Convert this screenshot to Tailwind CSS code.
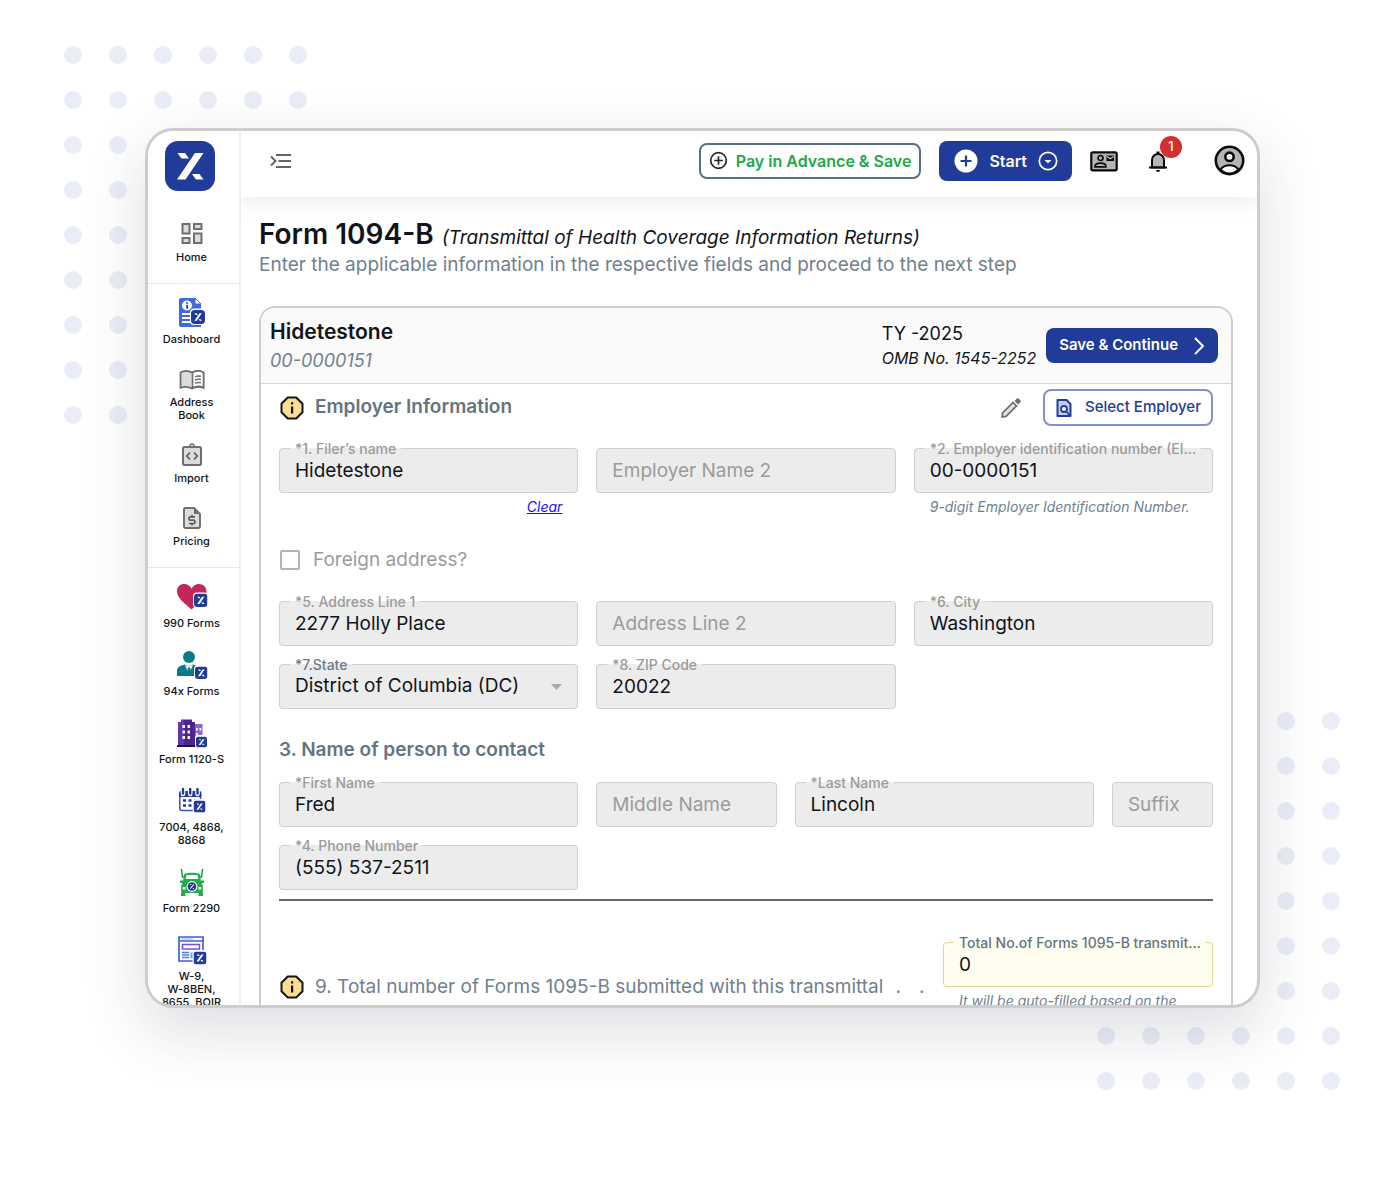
<!DOCTYPE html>
<html lang="en">
<head>
  <meta charset="UTF-8" />
  <meta name="viewport" content="width=device-width, initial-scale=1" />
  <title>Form 1094-B</title>
  <script src="https://cdn.jsdelivr.net/npm/@tailwindcss/browser@4"></script>
</head>
<body class="bg-white font-['Inter',sans-serif] text-[#111418]">

  <!-- shared symbols -->
  <svg class="absolute size-0" aria-hidden="true">
    <defs>
      <pattern id="dots" width="45" height="45" patternUnits="userSpaceOnUse">
        <circle cx="22" cy="22" r="9" fill="#eaedf7" />
      </pattern>
      <symbol id="brand" viewBox="0 0 50 50">
        <rect width="50" height="50" rx="13" fill="#213c98" />
        <path fill="#fff" d="M12.500 12h7.500l4 5.500h-7.500zM30 12h8.500L20.500 38.500H12zM27 33h7.500l4 5.500H31z" />
      </symbol>
      <symbol id="info" viewBox="0 0 24 24">
        <path d="M7.800 1.500h8.400l6.300 6.300v8.400l-6.300 6.300H7.800l-6.300-6.300V7.800z" fill="#fddc94" stroke="#111418" stroke-width="2" stroke-linejoin="round" />
        <path d="M11 10.500h2.200v7H11zM11 6.200h2.200v2.200H11z" fill="#111418" />
      </symbol>
    </defs>
  </svg>

  <div class="relative h-screen overflow-hidden pt-32 pr-[113px] pb-[177px] pl-[145px]">
    <svg class="absolute left-[51px] top-[33px]" width="270" height="405"><rect width="270" height="405" fill="url(#dots)" /></svg>
    <svg class="absolute right-[19px] bottom-[81px]" width="270" height="405"><rect width="270" height="405" fill="url(#dots)" /></svg>

    <div class="relative flex h-full overflow-hidden rounded-[28px] border-3 border-[#cdcdcd] bg-white shadow-[0_22px_60px_2px_rgba(50,55,80,0.16)]">

      <!-- sidebar -->
      <nav class="relative z-20 w-[93px] shrink-0 border-r-2 border-[#edeff2] bg-white pt-[10px] text-center text-[11px] leading-[13px] font-medium">
        <a href="#" class="mb-[25px] flex justify-center pr-2" aria-label="Home page"><svg width="50" height="50"><use href="#brand" /></svg></a>

        <div class="border-b border-[#e4e9ee] pb-[19px]">
          <a href="#" class="flex flex-col items-center gap-[5px] pr-1">
            <span class="flex h-[30px] items-end">
              <svg width="24" height="24" viewBox="0 0 24 24" fill="#dcdcdc" stroke="#6e6e6e" stroke-width="2"><path d="M2.500 2h7v9.500h-7zM14 2h7.500v5H14zM14 11.500h7.500V21H14zM2.500 16h7v5h-7z" /></svg>
            </span>
            Home
          </a>
        </div>

        <div class="flex flex-col gap-[15px] border-b border-[#e4e9ee] pt-[14px] pb-[19px]">
          <a href="#" class="flex flex-col items-center gap-[5px] pr-1">
            <span class="flex h-[30px] items-end">
              <svg width="28" height="30" viewBox="0 0 28 30">
                <path d="M3 0h14l6 6v23H3a2 2 0 0 1-2-2V2a2 2 0 0 1 2-2z" fill="#4169e1" />
                <path d="M17 0l6 6h-6z" fill="#fff" stroke="#4169e1" />
                <circle cx="9" cy="7.500" r="5" fill="#fff" />
                <path d="M8.200 6.800h1.800v4H8.200zM8.200 4.200h1.800v1.600H8.200z" fill="#213c98" />
                <path d="M4 16h9M4 20h8M4 24h8" stroke="#fff" stroke-width="1.800" />
                <rect x="12" y="10.500" width="15.500" height="16.500" rx="4" fill="#fff" />
                <use href="#brand" x="13" y="12" width="14" height="14" />
              </svg>
            </span>
            Dashboard
          </a>
          <a href="#" class="flex flex-col items-center gap-[5px] pr-1">
            <span class="flex h-[30px] items-end">
              <svg width="26" height="22" viewBox="0 0 26 22">
                <path d="M1.500 3.500C5 1.500 9.500 1.500 13 3.500c3.500-2 8-2 11.500 0v15.500c-3.500-1.500-8-1.500-11.500.5-3.500-2-8-2-11.500-.5z" fill="#dcdcdc" stroke="#6e6e6e" stroke-width="1.800" stroke-linejoin="round" />
                <path d="M13.500 3.500c3.500-2 7.500-2 11 0v15c-3.500-1.500-7.500-1.500-11 .5z" fill="#fff" stroke="#6e6e6e" stroke-width="1.600" />
                <path d="M16 7.800c2-.9 4-.9 6-.5M16 11c2-.9 4-.9 6-.5M16 14.200c2-.9 4-.9 6-.5" fill="none" stroke="#6e6e6e" stroke-width="1.400" />
              </svg>
            </span>
            <span>Address<br />Book</span>
          </a>
          <a href="#" class="flex flex-col items-center gap-[5px] pr-1">
            <span class="flex h-[30px] items-end">
              <svg width="22" height="24" viewBox="0 0 22 24">
                <circle cx="11" cy="3" r="2" fill="#fff" stroke="#6e6e6e" stroke-width="1.500" />
                <rect x="2" y="4" width="18" height="18" rx="1.500" fill="#dcdcdc" stroke="#6e6e6e" stroke-width="2" />
                <path d="M9 9.500L5.800 13 9 16.500M13 9.500l3.200 3.500-3.200 3.500" fill="none" stroke="#5e5e5e" stroke-width="1.800" />
              </svg>
            </span>
            Import
          </a>
          <a href="#" class="flex flex-col items-center gap-[5px] pr-1">
            <span class="flex h-[30px] items-end">
              <svg width="20" height="24" viewBox="0 0 20 24">
                <path d="M3 2h9l6 6v12.500a1.500 1.500 0 0 1-1.500 1.500h-13A1.500 1.500 0 0 1 2 20.500V3a1 1 0 0 1 1-1z" fill="#dcdcdc" stroke="#6e6e6e" stroke-width="1.900" />
                <path d="M12 1.500V8h6z" fill="#6e6e6e" />
                <path d="M13 10.800H8.500a1.400 1.400 0 0 0-1.500 1.400v.5a1.400 1.400 0 0 0 1.500 1.500h3a1.400 1.400 0 0 1 1.500 1.400v.5a1.400 1.400 0 0 1-1.500 1.400H7M10 8.800v2M10 17.500v2" fill="none" stroke="#5e5e5e" stroke-width="1.700" />
              </svg>
            </span>
            Pricing
          </a>
        </div>

        <div class="flex flex-col gap-5 pt-[14px]">
          <a href="#" class="flex flex-col items-center gap-[5px] pr-1">
            <span class="flex h-[30px] items-center">
              <svg width="32" height="28" viewBox="0 0 32 28">
                <path d="M15.500 26.500C9 20.500 1 15 1 8.200 1 3.500 4.500 1 8 1c3.500 0 6 1.800 7.500 4.800C17 2.800 19.800 1 23 1c4 0 7.500 3 7.500 7.500 0 7-8.500 12-15 18z" fill="#c42757" />
                <rect x="17" y="9.500" width="15" height="15" rx="4" fill="#fff" />
                <use href="#brand" x="18" y="10.500" width="13.500" height="13.500" />
              </svg>
            </span>
            990 Forms
          </a>
          <a href="#" class="flex flex-col items-center gap-[5px] pr-1">
            <span class="flex h-[30px] items-center">
              <svg width="32" height="30" viewBox="0 0 32 30">
                <circle cx="13" cy="7" r="6" fill="#0a7a86" />
                <path d="M1 26v-5c0-4 3-5.500 8-6.500l4 2 4-2c5 1 8 2.500 8 6.500v5z" fill="#0a7a86" />
                <path d="M9 15l4 9 4-9-4 1.500z" fill="#fff" />
                <path d="M12 17.500h2.200l1.200 6.500-2.300 2-2.300-2z" fill="#0a7a86" />
                <rect x="18" y="15" width="14" height="14" rx="4" fill="#fff" />
                <use href="#brand" x="19" y="16.500" width="12.500" height="12.500" />
              </svg>
            </span>
            94x Forms
          </a>
          <a href="#" class="flex flex-col items-center gap-[5px] pr-1">
            <span class="flex h-[30px] items-center">
              <svg width="32" height="30" viewBox="0 0 32 30">
                <path d="M18 6h8.500v22H18z" fill="#8d63d2" />
                <path d="M20 10h1.800v2.500H20zM23.500 10h1.800v2.500h-1.800zM20 15h1.800v2.500H20z" fill="#fff" />
                <path d="M2 4h3V1.500h11V4h3v24H2z" fill="#4a2590" />
                <path d="M5 2h3v26H2V4h3z" fill="#6236b0" />
                <path d="M6.500 7H9v3H6.500zM11.500 7H14v3h-2.500zM6.500 12.500H9v3H6.500zM11.500 12.500H14v3h-2.500zM6.500 18H9v3H6.500zM11.500 18H14v3h-2.500z" fill="#fff" />
                <path d="M1 27h19v2H1z" fill="#1d1138" />
                <rect x="19" y="17" width="13" height="13" rx="3" fill="#fff" />
                <use href="#brand" x="20" y="18.500" width="11" height="11" />
              </svg>
            </span>
            Form 1120-S
          </a>
          <a href="#" class="flex flex-col items-center gap-[5px] pr-1">
            <span class="flex h-[30px] items-center">
              <svg width="28" height="28" viewBox="0 0 28 28">
                <path d="M1.800 8v13.500a2 2 0 0 0 2 2H15M22.500 8v4" fill="none" stroke="#3a55ac" stroke-width="1.500" />
                <path d="M1 10V6a2 2 0 0 1 2-2h18.500a2 2 0 0 1 2 2v4z" fill="#213c98" />
                <path d="M5 2v5M12.200 2v5M19.500 2v5" stroke="#fff" stroke-width="4.600" stroke-linecap="round" />
                <path d="M5 2v4.500M12.200 2v4.500M19.500 2v4.500" stroke="#213c98" stroke-width="2.400" stroke-linecap="round" />
                <path d="M10.500 13.500h3M16 13.500h3M5 13.500h3M5 18.500h3M10.500 18.500h3" stroke="#213c98" stroke-width="2.500" />
                <rect x="14.500" y="12" width="13.500" height="14" rx="4" fill="#fff" />
                <use href="#brand" x="15.500" y="13.500" width="12" height="12" />
              </svg>
            </span>
            <span>7004, 4868,<br />8868</span>
          </a>
          <a href="#" class="flex flex-col items-center gap-[5px] pr-1">
            <span class="flex h-[30px] items-center">
              <svg width="24" height="30" viewBox="0 0 24 30">
                <path d="M1.500 2l1 8h2M22.500 2l-1 8h-2" fill="none" stroke="#24a148" stroke-width="1.600" />
                <path d="M4 7.500C5.500 5 18.500 5 20 7.500l.8 6H24V16h-2.200l1 3v8H23v2h-4.500v-3h-13v3H1v-2h.2v-8l1-3H0v-2.500h3.200z" fill="#25ac4b" />
                <path d="M6.500 8h11l.8 4H5.700z" fill="#fff" />
                <path d="M2.800 20h2.800v2.500H2.800zM18.400 20h2.800v2.500h-2.800z" fill="#fff" />
                <circle cx="12" cy="19.500" r="5.400" fill="#fff" />
                <circle cx="12" cy="19.500" r="4.300" fill="#213c98" />
                <path d="M10.300 17.500h1M13.700 17.500l-3.400 4M12.800 21.500h1" stroke="#fff" stroke-width="1.100" />
              </svg>
            </span>
            Form 2290
          </a>
          <a href="#" class="flex flex-col items-center gap-[5px] pr-1">
            <span class="flex h-[30px] items-center">
              <svg width="30" height="30" viewBox="0 0 30 30">
                <path d="M2 2h24v24H2z" fill="#fff" stroke="#3b62d4" stroke-width="1.700" />
                <path d="M2 6h24" stroke="#3b62d4" stroke-width="1.500" />
                <path d="M4 4h12" stroke="#7fb0ff" stroke-width="1" />
                <path d="M5.500 9.500h17v4.500h-17z" fill="#fff" stroke="#6a55d8" stroke-width="1.500" />
                <path d="M5 17.500h7M5 20h7M5 22.500h7" stroke="#4c7cf0" stroke-width="1.500" />
                <path d="M13.500 17.500h4v6h-4z" fill="#6aa5f5" />
                <rect x="15.500" y="15" width="14.500" height="15" rx="4" fill="#fff" />
                <use href="#brand" x="16.500" y="16.500" width="13" height="13" />
              </svg>
            </span>
            <span>W-9,<br />W-8BEN,<br />8655, BOIR</span>
          </a>
        </div>
      </nav>

      <div class="min-w-0 flex-1">
        <!-- top bar -->
        <header class="relative z-10 flex h-[66px] items-center bg-white pr-3 pb-[7px] pl-[29px] shadow-[0_6px_20px_rgba(0,0,0,0.07)]">
          <button type="button" class="mr-auto" aria-label="Toggle menu">
            <svg width="22" height="16" viewBox="0 0 22 16" fill="none" stroke="#666" stroke-width="2"><path d="M1 3.500L5.500 8 1 12.500M6 2h15M8.500 8H21M6 14h15" /></svg>
          </button>

          <button type="button" class="mr-[18px] flex h-9 items-center gap-2 rounded-lg border-2 border-[#5c6e7f] px-2 text-base font-semibold text-[#20a84b]">
            <svg width="19" height="19" viewBox="0 0 19 19" fill="none" stroke="#22272e" stroke-width="1.700"><circle cx="9.500" cy="9.500" r="7.800" /><path d="M9.500 5.200v8.600M5.200 9.500h8.600" /></svg>
            Pay in Advance &amp; Save
          </button>

          <button type="button" class="mr-[18px] flex h-10 items-center gap-[11px] rounded-lg bg-[#213c98] pr-[14px] pl-[15px] text-base font-semibold text-white">
            <svg width="24" height="24" viewBox="0 0 24 24"><circle cx="12" cy="12" r="11.500" fill="#fff" /><path d="M12 6.500v11M6.500 12h11" stroke="#213c98" stroke-width="2.200" /></svg>
            Start
            <svg width="20" height="20" viewBox="0 0 20 20"><circle cx="10" cy="10" r="8.700" fill="none" stroke="#fff" stroke-width="1.700" /><path d="M6.500 9h7L10 12.500z" fill="#fff" /></svg>
          </button>

          <button type="button" class="mr-7" aria-label="Contacts">
            <svg width="28" height="22" viewBox="0 0 28 22">
              <rect x="1.300" y="2.300" width="25.400" height="18" rx="1.500" fill="#b5b5b5" stroke="#0b0b0b" stroke-width="2.200" />
              <circle cx="10.500" cy="8" r="2.500" fill="#b5b5b5" stroke="#0b0b0b" stroke-width="1.700" />
              <path d="M5 16.800c0-2.500 2.500-3.600 5.500-3.600s5.500 1.100 5.500 3.600z" fill="#b5b5b5" stroke="#0b0b0b" stroke-width="1.700" />
              <path d="M16.500 5.500h7.500v5.500h-7.500z" fill="#0b0b0b" />
              <path d="M17 6.500l3.200 2.200 3.300-2.200" fill="none" stroke="#ccc" stroke-width="1.200" />
            </svg>
          </button>

          <button type="button" class="relative mr-11" aria-label="Notifications">
            <svg width="24" height="24" viewBox="0 0 24 24">
              <path d="M6 18.500V11a6 6 0 0 1 12 0v7.500z" fill="#b5b5b5" stroke="#0b0b0b" stroke-width="2" />
              <path d="M3 17.500h18v2H3zM10.500 2.500h3V5h-3zM10 21h4a2 2 0 0 1-4 0z" fill="#0b0b0b" />
            </svg>
            <span class="absolute -top-[13px] left-[14px] flex size-[22px] items-center justify-center rounded-full bg-[#d32f2f] text-[13px] font-medium text-white">1</span>
          </button>

          <button type="button" aria-label="Account">
            <svg width="31" height="31" viewBox="0 0 31 31">
              <circle cx="15.500" cy="15.500" r="13.700" fill="#b5b5b5" stroke="#0b0b0b" stroke-width="2.600" />
              <path d="M6.500 24.500c2-3 5.500-4.300 9-4.300s7 1.300 9 4.300c-2.300 2.600-5.500 4-9 4s-6.700-1.400-9-4z" fill="#fff" stroke="#0b0b0b" stroke-width="2" />
              <circle cx="15.500" cy="11.800" r="4.200" fill="#fff" stroke="#0b0b0b" stroke-width="2.600" />
            </svg>
          </button>
        </header>

        <main class="pt-[21px] pr-6 pl-[18px]">
          <div class="flex h-8 items-baseline gap-2 leading-8 whitespace-nowrap">
            <h1 class="text-[28px] font-semibold">Form 1094-B</h1>
            <em class="text-[19px]">(Transmittal of Health Coverage Information Returns)</em>
          </div>
          <p class="text-[19px] leading-[30px] text-[#71808f]">Enter the applicable information in the respective fields and proceed to the next step</p>

          <section class="mt-[26px] rounded-t-2xl border-2 border-b-0 border-[#cecece]">
            <div class="flex h-[76px] items-center rounded-t-[14px] border-b border-[#d6d6d6] bg-[#fafafa] pr-[13px] pl-[9px]">
              <div class="mr-auto leading-[29px]">
                <h2 class="text-[21px] font-semibold">Hidetestone</h2>
                <p class="text-[18px] text-[#71808f] italic">00-0000151</p>
              </div>
              <div class="mr-[10px] leading-[25px]">
                <p class="text-[18px]">TY -2025</p>
                <p class="text-base italic">OMB No. 1545-2252</p>
              </div>
              <button type="button" class="flex h-[35px] items-center gap-[15px] rounded-lg bg-[#213c98] px-[13px] text-[15px] font-semibold text-white">
                Save &amp; Continue
                <svg width="12" height="18" viewBox="0 0 12 18" fill="none" stroke="#fff" stroke-width="2"><path d="M2 1l8 8-8 8" /></svg>
              </button>
            </div>

            <form class="px-[18px] pt-[5px]">
              <div class="flex items-center">
                <svg class="ml-px" width="24" height="24"><use href="#info" /></svg>
                <h3 class="mr-auto ml-[11px] text-[19px] font-semibold text-[#64747f]">Employer Information</h3>
                <button type="button" class="mr-5" aria-label="Edit employer">
                  <svg width="24" height="24" viewBox="0 0 24 24"><path d="M3 21l.6-4L14 6.500 17.500 10 7 20.400z" fill="#e0e0e0" stroke="#6e6e6e" stroke-width="1.700" /><path d="M15.500 5L18 2.500c.5-.5 1-.5 1.500 0L21.500 4.500c.5.500.5 1 0 1.500L19 8.500z" fill="#6e6e6e" /></svg>
                </button>
                <button type="button" class="flex h-[37px] items-center gap-3 rounded-lg border-2 border-[#8490c8] px-[10px] text-[15px] font-medium text-[#213c98]">
                  <svg width="18" height="20" viewBox="0 0 18 20"><path d="M2.500 2h9L15.500 6v12h-13z" fill="#c3cbe6" stroke="#213c98" stroke-width="2" stroke-linejoin="round" /><circle cx="9" cy="11" r="3" fill="#fff" stroke="#213c98" stroke-width="1.800" /><path d="M11 13l4 4.500" stroke="#213c98" stroke-width="1.800" /></svg>
                  Select Employer
                </button>
              </div>

              <div class="mt-[22px] grid grid-cols-3 gap-[18px] text-[19px]">
                <div>
                  <fieldset class="flex h-[45px] min-w-0 items-center rounded border border-[#d0d0d0] bg-[#ececec] px-[10px]">
                    <legend class="h-0 px-[5px] text-[14px] leading-[0px] font-medium text-[#9b9b9b]"><label for="filer">*1. Filer’s name</label></legend>
                    <input id="filer" type="text" value="Hidetestone" class="h-full w-full px-[5px] outline-none" />
                  </fieldset>
                  <p class="pt-1 pr-4 text-right text-[14px] leading-5 italic"><a href="#" class="text-[#1a0dff] underline">Clear</a></p>
                </div>
                <input type="text" aria-label="Employer Name 2" placeholder="Employer Name 2" class="h-[45px] w-full rounded border border-[#d0d0d0] bg-[#ececec] px-[15px] outline-none placeholder:text-[#9b9b9b]" />
                <div>
                  <fieldset class="flex h-[45px] min-w-0 items-center rounded border border-[#d0d0d0] bg-[#ececec] px-[10px]">
                    <legend class="h-0 px-[5px] text-[14px] leading-[0px] font-medium whitespace-nowrap text-[#9b9b9b]"><label for="ein">*2. Employer identification number (EI...</label></legend>
                    <input id="ein" type="text" value="00-0000151" class="h-full w-full px-[5px] outline-none" />
                  </fieldset>
                  <p class="pt-1 pl-4 text-[14px] leading-5 whitespace-nowrap text-[#71808f] italic">9-digit Employer Identification Number.</p>
                </div>
              </div>

              <label class="mt-7 flex items-center gap-[13px] pl-px text-[19px] leading-[30px] text-[#9b9b9b]">
                <input type="checkbox" class="size-5 appearance-none rounded-xs border-2 border-[#b3b3b3]" />
                Foreign address?
              </label>

              <div class="mt-[26px] grid grid-cols-3 gap-[18px] text-[19px]">
                <fieldset class="flex h-[45px] min-w-0 items-center rounded border border-[#d0d0d0] bg-[#ececec] px-[10px]">
                  <legend class="h-0 px-[5px] text-[14px] leading-[0px] font-medium text-[#9b9b9b]"><label for="line1">*5. Address Line 1</label></legend>
                  <input id="line1" type="text" value="2277 Holly Place" class="h-full w-full px-[5px] outline-none" />
                </fieldset>
                <input type="text" aria-label="Address Line 2" placeholder="Address Line 2" class="h-[45px] w-full rounded border border-[#d0d0d0] bg-[#ececec] px-[15px] outline-none placeholder:text-[#9b9b9b]" />
                <fieldset class="flex h-[45px] min-w-0 items-center rounded border border-[#d0d0d0] bg-[#ececec] px-[10px]">
                  <legend class="h-0 px-[5px] text-[14px] leading-[0px] font-medium text-[#9b9b9b]"><label for="city">*6. City</label></legend>
                  <input id="city" type="text" value="Washington" class="h-full w-full px-[5px] outline-none" />
                </fieldset>
                <fieldset class="flex h-[45px] min-w-0 items-center rounded border border-[#d0d0d0] bg-[#ececec] px-[10px]">
                  <legend class="h-0 px-[5px] text-[14px] leading-[0px] font-medium text-[#6b7b8a]"><label for="state">*7.State</label></legend>
                  <select id="state" class="h-full w-full appearance-none px-[5px] outline-none"><option>District of Columbia (DC)</option></select>
                  <svg class="mr-[5px] shrink-0" width="11" height="6" viewBox="0 0 11 6"><path d="M0 0h11L5.500 6z" fill="#a9a9a9" /></svg>
                </fieldset>
                <fieldset class="flex h-[45px] min-w-0 items-center rounded border border-[#d0d0d0] bg-[#ececec] px-[10px]">
                  <legend class="h-0 px-[5px] text-[14px] leading-[0px] font-medium text-[#9b9b9b]"><label for="zip">*8. ZIP Code</label></legend>
                  <input id="zip" type="text" value="20022" class="h-full w-full px-[5px] outline-none" />
                </fieldset>
              </div>

              <h3 class="mt-[26px] text-[19px] leading-[30px] font-semibold text-[#64747f]">3. Name of person to contact</h3>

              <div class="mt-[17px] grid grid-cols-[299fr_180fr_299fr_101fr] gap-[18px] text-[19px]">
                <fieldset class="flex h-[45px] min-w-0 items-center rounded border border-[#d0d0d0] bg-[#ececec] px-[10px]">
                  <legend class="h-0 px-[5px] text-[14px] leading-[0px] font-medium text-[#9b9b9b]"><label for="first">*First Name</label></legend>
                  <input id="first" type="text" value="Fred" class="h-full w-full px-[5px] outline-none" />
                </fieldset>
                <input type="text" aria-label="Middle Name" placeholder="Middle Name" class="h-[45px] w-full rounded border border-[#d0d0d0] bg-[#ececec] px-[15px] outline-none placeholder:text-[#9b9b9b]" />
                <fieldset class="flex h-[45px] min-w-0 items-center rounded border border-[#d0d0d0] bg-[#ececec] px-[10px]">
                  <legend class="h-0 px-[5px] text-[14px] leading-[0px] font-medium text-[#9b9b9b]"><label for="last">*Last Name</label></legend>
                  <input id="last" type="text" value="Lincoln" class="h-full w-full px-[5px] outline-none" />
                </fieldset>
                <input type="text" aria-label="Suffix" placeholder="Suffix" class="h-[45px] w-full rounded border border-[#d0d0d0] bg-[#ececec] px-[15px] outline-none placeholder:text-[#9b9b9b]" />
                <fieldset class="flex h-[45px] min-w-0 items-center rounded border border-[#d0d0d0] bg-[#ececec] px-[10px]">
                  <legend class="h-0 px-[5px] text-[14px] leading-[0px] font-medium text-[#9b9b9b]"><label for="phone">*4. Phone Number</label></legend>
                  <input id="phone" type="text" value="(555) 537-2511" class="h-full w-full px-[5px] outline-none" />
                </fieldset>
              </div>

              <hr class="mt-[9px] border-t-2 border-[#666]" />

              <div class="mt-[41px] flex items-start text-[19px]">
                <div class="mt-[30px] flex flex-1 items-center overflow-hidden leading-[30px] whitespace-nowrap text-[#71808f]">
                  <svg class="ml-px shrink-0" width="24" height="24"><use href="#info" /></svg>
                  <span class="ml-[11px]">9. Total number of Forms 1095-B submitted with this transmittal</span>
                  <span class="ml-3">.</span>
                  <span class="ml-[18px]">.</span>
                </div>
                <div class="w-[270px] shrink-0">
                  <fieldset class="flex h-[45px] min-w-0 items-center rounded border border-[#e3d48c] bg-[#fffdf0] px-[10px]">
                    <legend class="h-0 px-[5px] text-[14px] leading-[0px] font-medium whitespace-nowrap text-[#64747f]"><label for="total">Total No.of Forms 1095-B transmit...</label></legend>
                    <input id="total" type="text" value="0" class="h-full w-full px-[5px] outline-none" />
                  </fieldset>
                  <p class="pt-1 pl-4 text-[14px] leading-5 text-[#71808f] italic">It will be auto-filled based on the</p>
                </div>
              </div>
            </form>
          </section>
        </main>
      </div>
    </div>
  </div>
</body>
</html>
